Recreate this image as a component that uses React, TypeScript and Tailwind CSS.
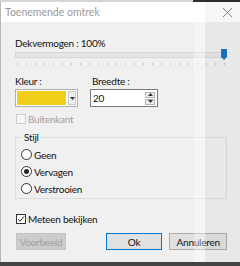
import React from "react";

const font = { fontFamily: 'Lato, "Noto Sans", sans-serif' };
const t = "text-[10px] leading-[12px] tracking-[-0.25px]";

function CheckBox({ checked, disabled }: { checked?: boolean; disabled?: boolean }) {
  return (
    <div
      className={`w-[10px] h-[10px] border flex items-center justify-center ${
        disabled ? "border-[#cccccc] bg-[#f5f5f5]" : "border-[#333333] bg-white"
      }`}
    >
      {checked && (
        <svg width="8" height="8" viewBox="0 0 8 8">
          <path d="M1 4.2 L3 6.2 L7 1.5" fill="none" stroke="#222" strokeWidth="1" />
        </svg>
      )}
    </div>
  );
}

function Radio({ checked, label }: { checked?: boolean; label: string }) {
  return (
    <div className="flex items-center h-[17px]">
      <div className="w-[11px] h-[11px] rounded-full border border-[#333333] bg-white flex items-center justify-center">
        {checked && <div className="w-[5px] h-[5px] rounded-full bg-[#222222]" />}
      </div>
      <span className="ml-[2px] text-[10px] leading-[12px] tracking-[-0.25px] text-[#111111]">{label}</span>
    </div>
  );
}

export default function App() {
  const ticks = Array.from({ length: 24 });
  return (
    <div className="relative w-[240px] h-[266px] bg-[#f0f0f0] overflow-hidden" style={font}>
      {/* top window edge */}
      <div className="flex h-[2px]">
        <div className="w-[193px] bg-[#d4d4d4]" />
        <div className="flex-1 bg-[#2e2e2e]" />
      </div>
      <div className="border-l border-[#b9b9b9] h-[260px] flex flex-col">
        {/* title bar */}
        <div className="h-[20px] bg-white flex items-center justify-between pl-[4px] pr-[7px]">
          <span className="text-[10.5px] text-[#9a9a9a] leading-[12px]">Toenemende omtrek</span>
          <svg width="11" height="11" viewBox="0 0 11 11">
            <path d="M1 1 L10 10 M10 1 L1 10" stroke="#8a8a8a" strokeWidth="1" />
          </svg>
        </div>
        <div className="flex-1 pl-[14px] pr-[13px] flex flex-col">
          <div className="mt-[15px] h-[12px] text-[10px] leading-[12px] tracking-[-0.25px] text-[#111111]">Dekvermogen : 100%</div>
          {/* slider */}
          <div className="relative h-[11px] flex items-center">
            <div className="w-full h-[6px] bg-[#e6e6e6] border border-[#d6d6d6]" />
            <div className="absolute right-[0px] top-[0px] w-[6px] h-[11px]">
              <svg width="6" height="11" viewBox="0 0 6 11">
                <path d="M0 0 H6 V8 L3 11 L0 8 Z" fill="#1a72c6" />
              </svg>
            </div>
          </div>
          <div className="flex justify-between px-[2px] mt-[3px] h-[2px]">
            {ticks.map((_, i) => (
              <div key={i} className="w-[1px] h-[2px] bg-[#c4c4c4]" />
            ))}
          </div>
          {/* Kleur / Breedte */}
          <div className="flex mt-[10px]">
            <div className="w-[75px]">
              <div className={`h-[12px] ${t} text-[#111111]`}>Kleur :</div>
              <div className="mt-[2px] w-[63px] h-[18px] border border-[#b0b0b0] bg-white flex p-[1px]">
                <div className="w-[49px] h-full bg-[#f0cf1a]" />
                <div className="ml-[2px] flex-1 bg-[#eeeeee] border border-[#c8c8c8] flex items-center justify-center">
                  <svg width="5" height="3" viewBox="0 0 5 3">
                    <path d="M0 0 H5 L2.5 3 Z" fill="#333" />
                  </svg>
                </div>
              </div>
            </div>
            <div>
              <div className="h-[12px] text-[10px] leading-[12px] tracking-[-0.25px] text-[#111111] ml-[2px]">Breedte :</div>
              <div className="mt-[2px] w-[68px] h-[18px] border border-[#7a7a7a] bg-white flex items-center pl-[2px] pr-[2px]">
                <span className="flex-1 text-[10px] leading-[12px] tracking-[-0.25px] text-[#111111]">20</span>
                <div className="flex flex-col gap-[1px]">
                  <div className="w-[10px] h-[6px] border border-[#b5b5b5] bg-[#ededed] flex items-center justify-center">
                    <svg width="5" height="3" viewBox="0 0 5 3">
                      <path d="M0 3 H5 L2.5 0 Z" fill="#333" />
                    </svg>
                  </div>
                  <div className="w-[10px] h-[6px] border border-[#b5b5b5] bg-[#ededed] flex items-center justify-center">
                    <svg width="5" height="3" viewBox="0 0 5 3">
                      <path d="M0 0 H5 L2.5 3 Z" fill="#333" />
                    </svg>
                  </div>
                </div>
              </div>
            </div>
          </div>
          {/* Buitenkant */}
          <div className="flex items-center mt-[7px] h-[10px]">
            <div className="ml-[1px]">
              <CheckBox disabled />
            </div>
            <span className="ml-[2px] text-[10px] leading-[12px] tracking-[-0.25px] text-[#a0a0a0]">Buitenkant</span>
          </div>
          {/* Stijl group */}
          <div className="relative mt-[13px] h-[62px] border border-[#dcdcdc] pl-[5px] pt-[8px]">
            <span className="absolute left-[6px] top-[-7px] bg-[#f0f0f0] px-[2px] text-[10px] leading-[12px] tracking-[-0.25px] text-[#111111]">
              Stijl
            </span>
            <Radio label="Geen" />
            <Radio label="Vervagen" checked />
            <Radio label="Verstrooien" />
          </div>
          {/* Meteen bekijken */}
          <div className="flex items-center mt-[15px] h-[10px]">
            <div className="ml-[1px]">
              <CheckBox checked />
            </div>
            <span className="ml-[2px] text-[10px] leading-[12px] tracking-[-0.25px] text-[#111111]">Meteen bekijken</span>
          </div>
          {/* buttons */}
          <div className="flex mt-[9px] h-[17px]">
            <div className="ml-[1px] w-[50px] h-full bg-[#cccccc] border border-[#c4c4c4] flex items-center justify-center text-[10px] leading-[12px] tracking-[-0.25px] text-[#a0a0a0]">
              Voorbeeld
            </div>
            <div className="ml-[40px] w-[57px] h-full bg-[#e1e1e1] border border-[#0078d7] flex items-center justify-center text-[10px] leading-[12px] tracking-[-0.25px] text-[#111111]">
              Ok
            </div>
            <div className="ml-[7px] w-[58px] h-full bg-[#e1e1e1] border border-[#adadad] flex items-center justify-center text-[10px] leading-[12px] tracking-[-0.25px] text-[#111111]">
              Annuleren
            </div>
          </div>
        </div>
      </div>
      {/* bottom window edge */}
      <div className="h-[4px] bg-[#444444]" />
      {/* ghost overlay band on the right */}
      <div className="absolute top-[2px] bottom-[4px] left-[194px] w-[11px] bg-[rgba(255,255,255,0.35)] pointer-events-none" />
      <div className="absolute top-[2px] bottom-[4px] left-[205px] right-0 bg-[rgba(0,0,0,0.03)] pointer-events-none" />
    </div>
  );
}
